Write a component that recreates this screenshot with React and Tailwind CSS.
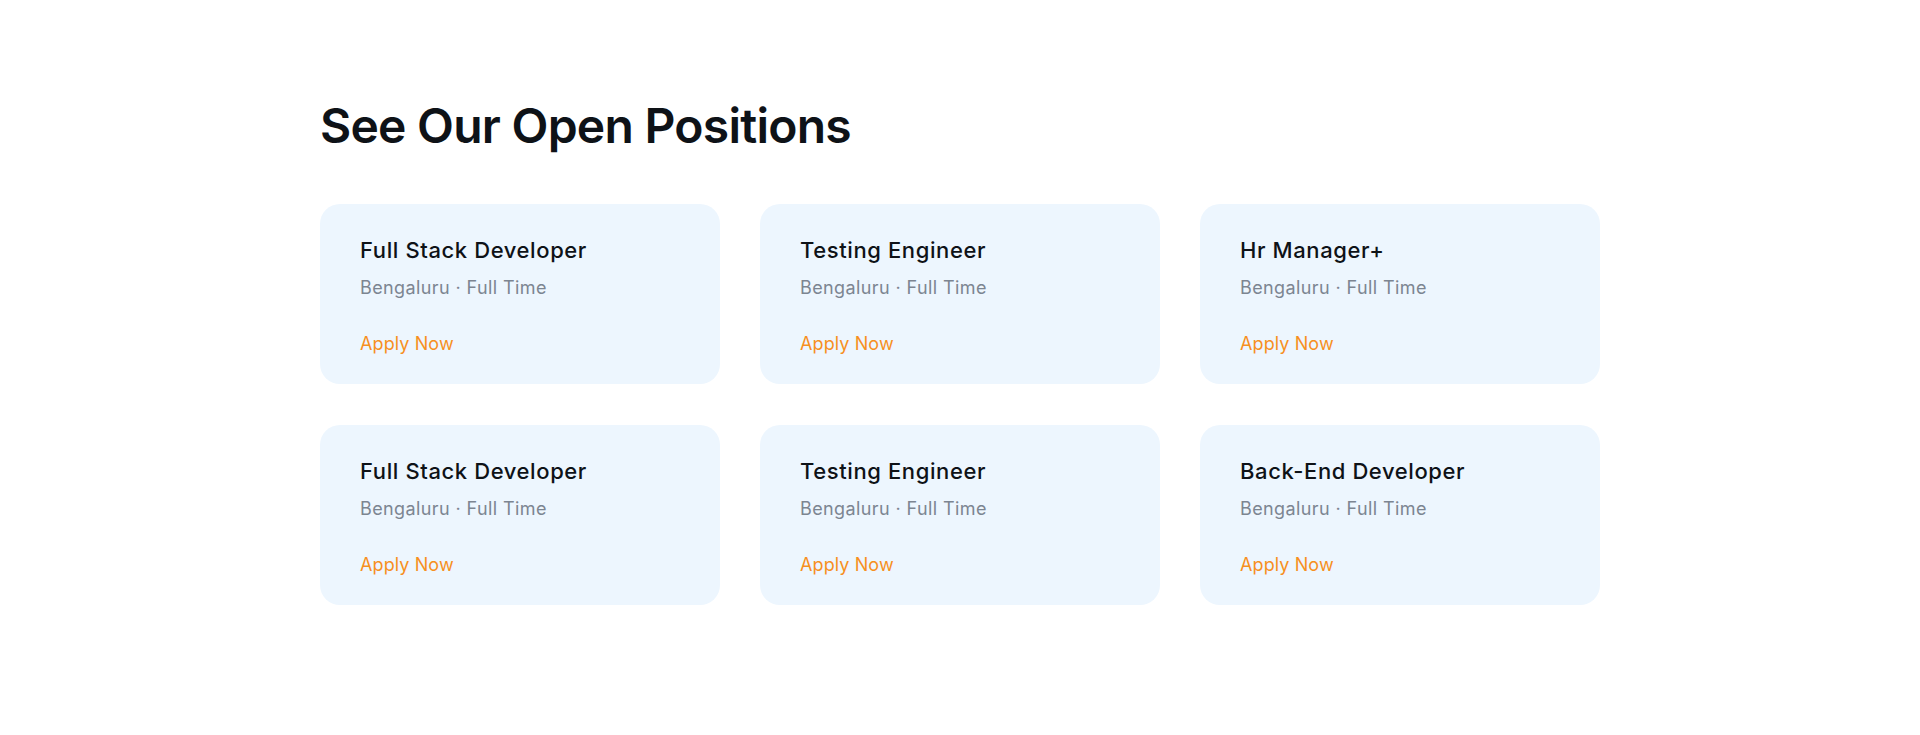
import React from "react";

const jobs = [
  "Full Stack Developer",
  "Testing Engineer",
  "Hr Manager+",
  "Full Stack Developer",
  "Testing Engineer",
  "Back-End Developer",
];

export default function App() {
  return (
    <div className="min-h-[735px] bg-white" style={{ fontFamily: "Inter, 'Noto Sans', sans-serif" }}>
      <div className="mx-auto w-[1280px] pt-[97px] pb-[130px]">
        <h2 className="text-[48px] leading-[58px] font-semibold text-[#0e1217] tracking-[-0.75px]">
          See Our Open Positions
        </h2>
        <div className="mt-[49px] grid grid-cols-3 gap-x-[40px] gap-y-[41px]">
          {jobs.map((j, i) => (
            <div key={i} className="h-[180px] rounded-[20px] bg-[#edf6fe] px-[40px] pt-[30px]">
              <div className="text-[22px] leading-[33px] font-medium text-[#0e1217] tracking-[0.6px]">{j}</div>
              <div className="mt-[7px] text-[18px] leading-[27px] text-[#7c8591] tracking-[0.4px]">Bengaluru · Full Time</div>
              <div className="mt-[29px] text-[18px] leading-[27px] text-[#f7901e] tracking-[0.1px]">Apply Now</div>
            </div>
          ))}
        </div>
      </div>
    </div>
  );
}
